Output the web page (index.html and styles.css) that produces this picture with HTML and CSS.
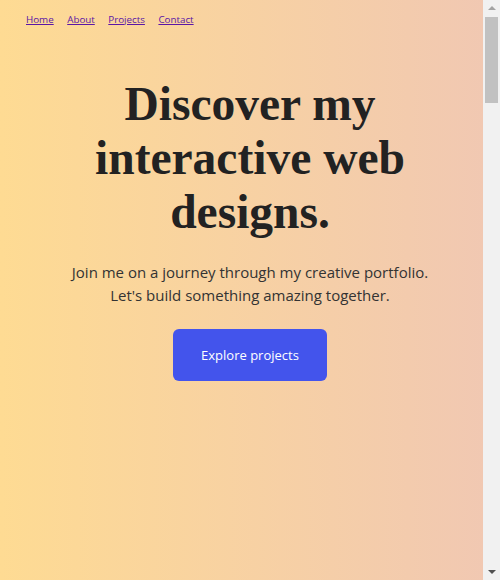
FILE: index.html
```html
<!DOCTYPE html>
<html lang="en">
<head>
<meta charset="utf-8">
<title>Portfolio</title>
<link rel="stylesheet" href="styles.css">
</head>
<body>
<div class="page">
  <nav class="nav">
    <a href="#">Home</a>
    <a href="#">About</a>
    <a href="#">Projects</a>
    <a href="#">Contact</a>
  </nav>
  <section class="hero">
    <h1 class="title">Discover my interactive web designs.</h1>
    <p class="lead">Join me on a journey through my creative portfolio.<br>Let's build something amazing together.</p>
    <a class="btn" href="#">Explore projects</a>
  </section>
</div>
<div class="scrollbar" aria-hidden="true">
  <span class="arrow up"></span>
  <span class="thumb"></span>
  <span class="arrow down"></span>
</div>
</body>
</html>
```
FILE: styles.css
```css
html { overflow-x: hidden; }
body {
  margin: 0;
  font-family: "Open Sans", "Noto Sans", sans-serif;
  color: #222;
}
.page {
  min-height: 3700px;
  background: linear-gradient(to right, #fedb93, #f1c8b2 97%);
}
.nav {
  display: flex;
  gap: 13.5px;
  padding: 13px 26px 0;
  font-size: 9.8px;
}
.nav a { color: #5b16a6; }
.hero {
  width: 100vw;
  box-sizing: border-box;
  display: flex;
  flex-direction: column;
  align-items: center;
  text-align: center;
  padding: 0 80px;
}
.title {
  margin: 51px 0 0;
  font-family: "Liberation Serif", serif;
  font-weight: 700;
  font-size: 47.5px;
  line-height: 54px;
  color: #222;
  max-width: 340px;
}
.lead {
  margin: 22px 0 0;
  font-size: 15px;
  line-height: 23px;
  color: #333;
  white-space: nowrap;
}
.btn {
  margin-top: 22px;
  width: 154px;
  height: 52px;
  display: flex;
  align-items: center;
  justify-content: center;
  background: #4354ec;
  color: #fff;
  border-radius: 6px;
  text-decoration: none;
  font-size: 13px;
  font-weight: 500;
}
.scrollbar {
  position: fixed;
  top: 0;
  right: 0;
  bottom: 0;
  width: 17px;
  background: #f1f1f1;
  display: flex;
  flex-direction: column;
  align-items: center;
}
.arrow {
  width: 0;
  height: 0;
  border-left: 4px solid transparent;
  border-right: 4px solid transparent;
}
.arrow.up {
  margin-top: 6px;
  border-bottom: 4px solid #a3a3a3;
}
.arrow.down {
  margin-top: auto;
  margin-bottom: 6px;
  border-top: 4px solid #505050;
}
.thumb {
  margin-top: 7px;
  width: 13px;
  height: 86px;
  background: #c1c1c1;
}
```
